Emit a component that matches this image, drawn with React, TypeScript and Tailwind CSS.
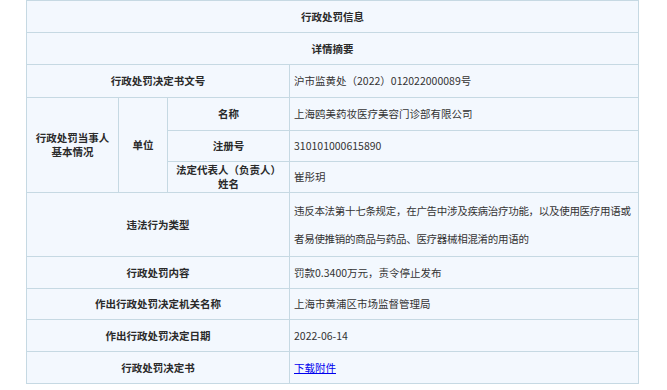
import React from "react";

const cell = "bg-[#f3f8fe] flex items-center";
const label = `${cell} justify-center text-center font-semibold text-[#2a2a2a] leading-[14px]`;
const value = `${cell} px-[4px] text-[#333]`;

export default function App() {
  return (
    <div className="w-[667px] h-[390px] bg-white">
      <div
        className="ml-[26px] w-[613px] grid grid-cols-[91px_48px_121px_348px] grid-rows-[31px_31px_32px_32px_30px_30px_63px_31px_30px_31px_31px] gap-px p-px bg-[#c6d9e3] text-[10.5px]"
        style={{ fontFamily: '"Noto Sans CJK SC", "Noto Sans", sans-serif' }}
      >
        <div className={`${label} col-span-4`}>行政处罚信息</div>
        <div className={`${label} col-span-4`}>详情摘要</div>

        <div className={`${label} col-span-3`}>行政处罚决定书文号</div>
        <div className={value}>沪市监黄处（2022）012022000089号</div>

        <div className={`${label} row-span-3`}>
          行政处罚当事人
          <br />
          基本情况
        </div>
        <div className={`${label} row-span-3`}>单位</div>
        <div className={label}>名称</div>
        <div className={value}>上海鸥美药妆医疗美容门诊部有限公司</div>
        <div className={label}>注册号</div>
        <div className={value}>310101000615890</div>
        <div className={label}>
          法定代表人（负责人）
          <br />
          姓名
        </div>
        <div className={value}>崔彤玥</div>

        <div className={`${label} col-span-3`}>违法行为类型</div>
        <div className={`${value} leading-[28px] tracking-[-0.3px]`}>
          违反本法第十七条规定，在广告中涉及疾病治疗功能，以及使用医疗用语或者易使推销的商品与药品、医疗器械相混淆的用语的
        </div>

        <div className={`${label} col-span-3`}>行政处罚内容</div>
        <div className={value}>罚款0.3400万元，责令停止发布</div>

        <div className={`${label} col-span-3`}>作出行政处罚决定机关名称</div>
        <div className={value}>上海市黄浦区市场监督管理局</div>

        <div className={`${label} col-span-3`}>作出行政处罚决定日期</div>
        <div className={value}>2022-06-14</div>

        <div className={`${label} col-span-3`}>行政处罚决定书</div>
        <div className={value}>
          <a href="#" className="text-[#0000ee] underline">
            下载附件
          </a>
        </div>
      </div>
    </div>
  );
}
